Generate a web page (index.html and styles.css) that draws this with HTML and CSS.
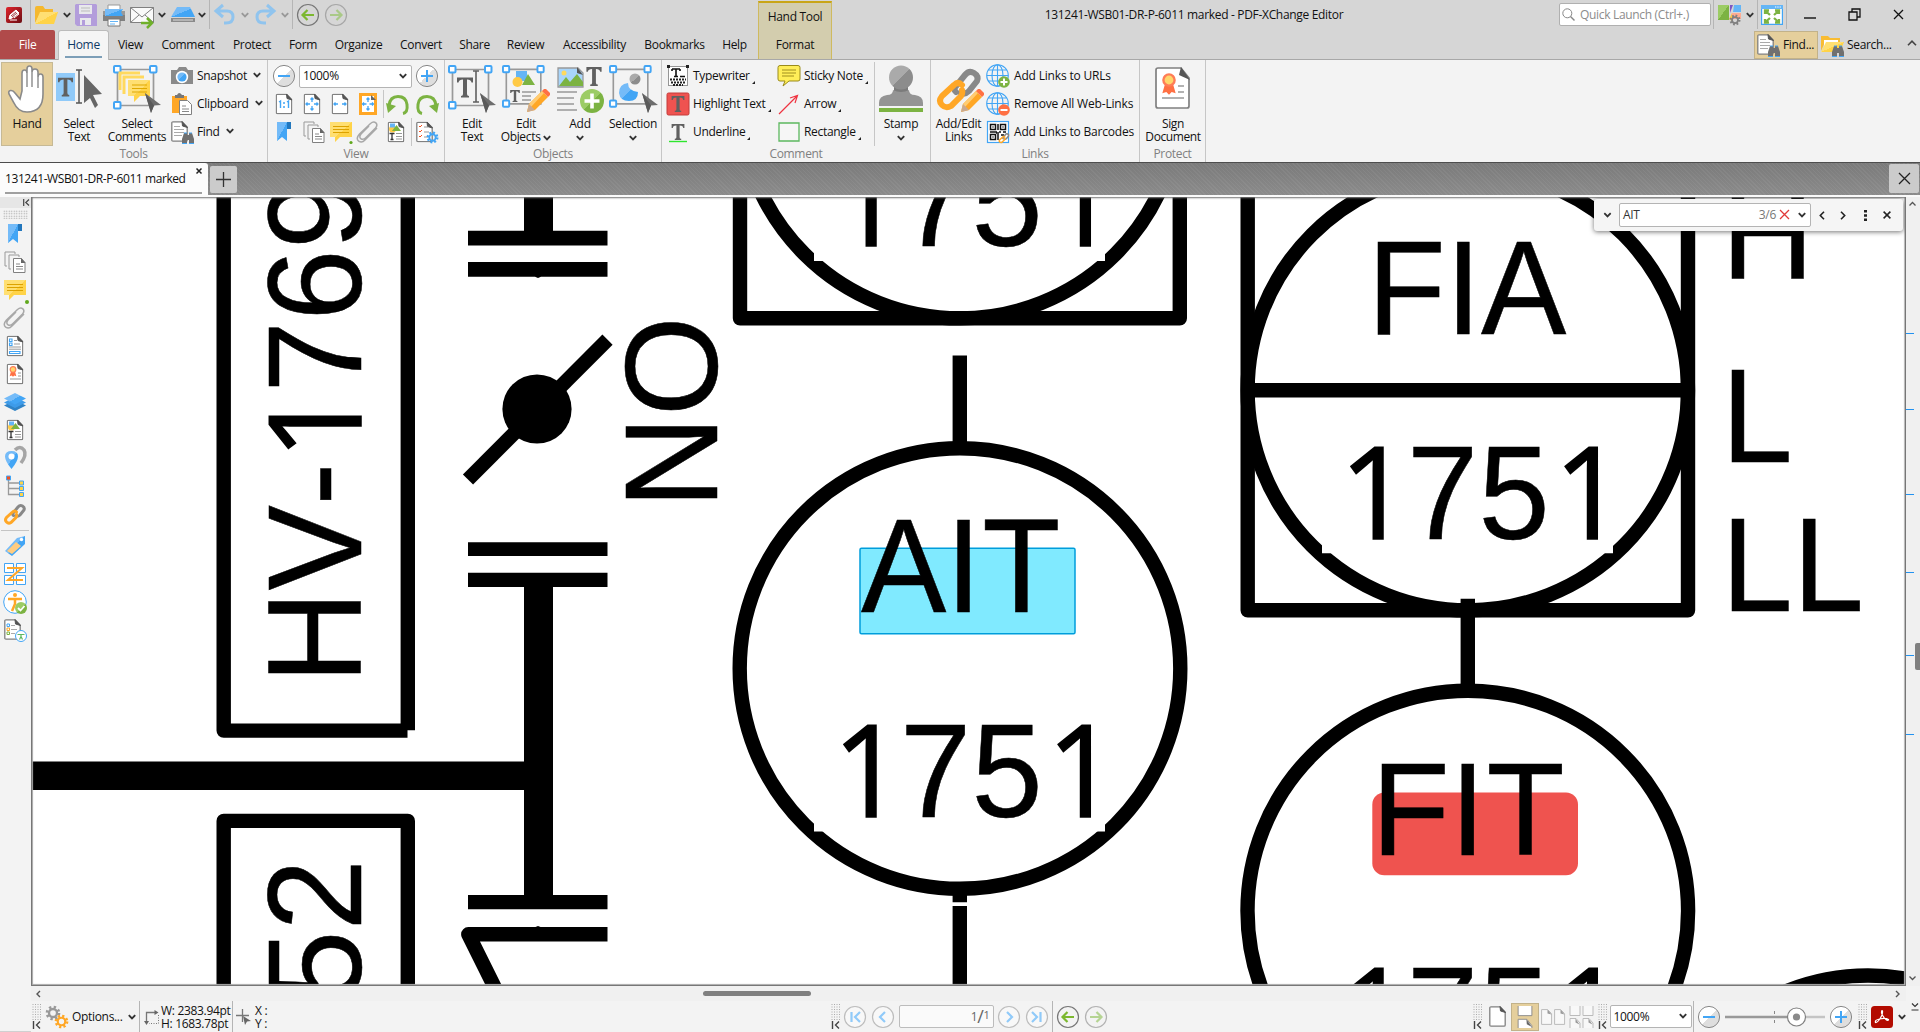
FILE: index.html
```html
<!DOCTYPE html>
<html lang="en">
<head>
<meta charset="utf-8">
<title>131241-WSB01-DR-P-6011 marked - PDF-XChange Editor</title>
<link rel="stylesheet" href="styles.css">
</head>
<body>
<svg class="defs" aria-hidden="true">
  <defs>
    <linearGradient id="gBtn" x1="0" y1="0" x2="1" y2="1"><stop offset=".5" stop-color="#fff"/><stop offset=".5" stop-color="#dedede"/></linearGradient>
    <linearGradient id="gBlue" x1="0" y1="0" x2="1" y2="1"><stop offset=".5" stop-color="#74bbf8"/><stop offset=".5" stop-color="#42a5f5"/></linearGradient>
    <linearGradient id="gYel" x1="0" y1="0" x2="1" y2="1"><stop offset=".5" stop-color="#ffdf72"/><stop offset=".5" stop-color="#ffd348"/></linearGradient>
    <linearGradient id="gGreen" x1="0" y1="0" x2="1" y2="1"><stop offset=".5" stop-color="#9ccc65"/><stop offset=".5" stop-color="#7cb342"/></linearGradient>
    <linearGradient id="gGrey" x1="0" y1="0" x2="1" y2="1"><stop offset=".5" stop-color="#aaa"/><stop offset=".5" stop-color="#8c8c8c"/></linearGradient>
    <linearGradient id="gRed" x1="0" y1="0" x2="1" y2="1"><stop offset="0" stop-color="#e0242c"/><stop offset="1" stop-color="#6b0d12"/></linearGradient>
  </defs>
  <symbol id="chev" viewBox="0 0 8 6"><path d="M.8 1.2 4 4.4 7.2 1.2" fill="none" stroke="currentColor" stroke-width="1.9"/></symbol>
  <symbol id="corner" viewBox="0 0 4 4"><path d="M4 0V4H0Z" fill="#222"/></symbol>
  <symbol id="cursor" viewBox="0 0 16 20"><path d="M0 0 16 12 9 12.500 6 20Z" fill="#6d6d6d"/><path d="M0 0 9 12.500 6 20Z" fill="#5a5a5a"/></symbol>
  <symbol id="binoc" viewBox="0 0 12 12"><path d="M2 1h3v2h2V1h3l2 6v5H7V8H5v4H0V7Z" fill="#707070"/><path d="M2 1h3M7 1h3M0 11.500h5M7 11.500h5" stroke="#42a5f5"/></symbol>
  <symbol id="page" viewBox="0 0 17 21"><path d="M2 .8H11L16.200 6V19q0 1.200-1.200 1.200H2Q.8 20.200.8 19V2Q.8.8 2 .8Z" fill="#fff" stroke="#808080" stroke-width="1.300"/><path d="M11 .5 16.500 6.500 11.500 5Z" fill="#555" stroke="#555"/></symbol>
  <symbol id="chain" viewBox="0 0 48 48"><g fill="none" stroke-width="6" stroke-linecap="round"><path d="M21 27q-3-2 0-6L30 10q4-5 9-2t3 8L34 26q-4 4-8 2" stroke="#888"/><path d="M27 20q-4-4-8 0L7 31q-4 5 0 9t9 1l10-10q2-3 1-6" stroke="#ffa726"/></g></symbol>
  <symbol id="pencil" viewBox="0 0 24 24"><path d="M1 23 3 15 16 2 22 8 9 21Z" fill="#ffa726"/><path d="M1 23 3 15 16 2 18 4 5 18Z" fill="#ffcc72"/><path d="M16 2 18 0q1-1 2 0l4 4q1 1 0 2l-2 2Z" fill="#ff7043"/><path d="M1 23 3 15l6 6Z" fill="#c9aa91"/></symbol>
  <symbol id="i-bookmark" viewBox="0 0 24 24"><path d="M5 2h10v19l-5-4-5 4Z" fill="url(#gBlue)"/><path d="M15 2h4v7h-4Z" fill="#2277bd"/></symbol>
  <symbol id="i-pages" viewBox="0 0 24 24"><path d="M4 16H2V2h10v2M8 19H6V5h10v2" fill="none" stroke="#999"/><path d="M10.500 8.500h8l3.500 4v10H10.500Z" fill="#fff" stroke="#808080"/><path d="M18 8l4.500 5H18Z" fill="#666"/><path d="M13 14h4M13 16.500h7M13 19h7" stroke="#888"/></symbol>
  <symbol id="i-note" viewBox="0 0 24 24"><path d="M1 2h22v15H11l-5 5v-5H1Z" fill="url(#gYel)"/><path d="M4 6.500h16M4 9.500h16M4 12.500h16" stroke="#dca200"/></symbol>
  <symbol id="i-clip" viewBox="0 0 24 24"><path d="M13 6 5 14q-2.500 3.500.3 5 2.200 1 4.700-1.500L19.500 8q2.500-3 .4-5.100-2.400-2-5.400.6L3.500 14q-4 4.600-.8 7.200 3.300 2 6.300-1.200L21 8" fill="none" stroke="#a8a8a8" stroke-width="1.500"/></symbol>
  <symbol id="i-content" viewBox="0 0 24 24"><use href="#page" x="3.500" y="1.500" width="17" height="21"/><circle cx="8.500" cy="9" r="3.500" fill="#ffca45"/><path d="M6 3.500h5v4H6Z" fill="#64b5f6"/><path d="M8 11 12.500 5 17 11Z" fill="#7cb342"/><path d="M5.500 13.500h5M8 13.500v6M6.500 19.500h3" stroke="#333" stroke-width="1.300"/><path d="M12 13.500h6M12 16.500h6M12 19h6" stroke="#999"/></symbol>
  <symbol id="i-back" viewBox="0 0 24 24"><circle cx="12" cy="12" r="10.500" fill="none" stroke="#777" stroke-width="1.200"/><path d="M18 12H7M11.500 7 6.500 12l5 5" fill="none" stroke="#7cb82f" stroke-width="2.200"/></symbol>
  <symbol id="i-fwd" viewBox="0 0 24 24"><g opacity=".6"><circle cx="12" cy="12" r="10.500" fill="none" stroke="#888" stroke-width="1.200"/><path d="M6 12H17M12.500 7l5 5-5 5" fill="none" stroke="#8cc152" stroke-width="2.200"/></g></symbol>
  <symbol id="i-minus" viewBox="0 0 24 24"><circle cx="12" cy="12" r="10.600" fill="url(#gBtn)" stroke="#888"/><path d="M6 12h12" stroke="#42a5f5" stroke-width="2"/></symbol>
  <symbol id="i-plus" viewBox="0 0 24 24"><circle cx="12" cy="12" r="10.600" fill="url(#gBtn)" stroke="#888"/><path d="M6 12h12M12 6v12" stroke="#42a5f5" stroke-width="2"/></symbol>
  <symbol id="i-globe" viewBox="0 0 24 24"><g fill="none" stroke="#42a5f5" stroke-width="1.100"><circle cx="11.500" cy="11.500" r="10.800"/><ellipse cx="11.500" cy="11.500" rx="5.500" ry="10.800"/><path d="M11.500 1v21M1 11.500h21M3 6h17M3 17h17"/></g></symbol>
  <symbol id="i-find" viewBox="0 0 24 24"><use href="#page" x="1" y="1" width="17" height="21"/><path d="M4 6.500h6M4 9.500h10M4 12.500h10M4 15.500h8" stroke="#aaa"/><use href="#binoc" x="12" y="12" width="12" height="12"/></symbol>
  <symbol id="handles" viewBox="0 0 48 48"><path d="M4.500 4.500H40.500V40.500H4.500Z" fill="none" stroke="#999" stroke-width="1.700"/><g fill="#fff" stroke="#42a5f5" stroke-width="2"><rect x="1" y="1" width="6.500" height="6.500" rx="1"/><rect x="37" y="1" width="6.500" height="6.500" rx="1"/><rect x="1" y="37" width="6.500" height="6.500" rx="1"/></g></symbol>
  <symbol id="bigT" viewBox="0 0 16 20"><path d="M0 0H16V5H14.500Q14 2 10 2V16.500Q10 18.500 12 18.500V20H4V18.500Q6 18.500 6 16.500V2Q2 2 1.500 5H0Z" fill="#606060"/></symbol>
  <symbol id="seal" viewBox="0 0 12 16"><path d="M3 8 1 15l3-1 2 2 2-2 3 1-2-7" fill="#ff7043"/><circle cx="6" cy="5" r="4.200" fill="#ffd66b" stroke="#ff7d57" stroke-width="1.800"/></symbol>
  <symbol id="grip" viewBox="0 0 10 27"><path d="M1 1V17M3.500 1V17M6 1V17M8.500 1V17" stroke="#aaa" stroke-dasharray="1 1.500"/><path d="M1.500 18v8M8 18.500 4.500 22 8 25.500" fill="none" stroke="#444" stroke-width="1.400"/></symbol>
  <symbol id="gear" viewBox="0 0 24 24"><circle cx="12" cy="12" r="8.500" fill="none" stroke="currentColor" stroke-width="5" stroke-dasharray="3.300 3.375"/><circle cx="12" cy="12" r="6" fill="none" stroke="currentColor" stroke-width="3.500"/></symbol>
</svg>

<header class="titlebar">
  <div class="qat">
    <svg width="18" height="18" viewBox="0 0 18 18"><rect x="1" y="1" width="16" height="16" rx="2" fill="url(#gRed)"/><path d="M4 13 5 9 11 4l3 3-7 5Zm5-1 5-4M5 14h7" fill="#fff" stroke="#fff"/><path d="M6 10l5-4M7 11l5-4" stroke="#8a1015" stroke-width=".8"/></svg>
    <i class="sep"></i>
    <svg width="24" height="20" viewBox="0 0 24 20"><path d="M1 18V3Q1 1 3 1h6l2 3h8v3H7Z" fill="#f5b82e"/><path d="M1 19 6 7H24L20 19Z" fill="url(#gYel)"/></svg>
    <svg class="chev"><use href="#chev"/></svg>
    <svg width="24" height="24" viewBox="0 0 24 24"><path d="M2 1H22L23 2V23H3L1 21V2Z" fill="#b39ddb"/><path d="M5 2h13v9H5ZM6 15h11v7H6Z" fill="#e8e8ec"/><path d="M7 5h9M7 8h9" stroke="#bbb"/><path d="M8 17h3v5H8Z" fill="#b39ddb"/></svg>
    <svg width="24" height="24" viewBox="0 0 24 24"><path d="M6 2H18V8H6Z" fill="#fff" stroke="#999"/><path d="M1 8H23V18H1Z" fill="#808080"/><path d="M1 8H23V12H1Z" fill="#999"/><path d="M3 6H21L19 9 21 13H3Z" fill="url(#gBlue)"/><path d="M6 16H18V23H6Z" fill="#fff" stroke="#777"/><path d="M8 18.500h8M8 21h5" stroke="#64b5f6"/></svg>
    <svg width="26" height="24" viewBox="0 0 26 24"><path d="M1.500 4.500h23v15h-23Z" fill="#fafafa" stroke="#808080"/><path d="M1.500 4.500 13 14 24.500 4.500M1.500 19.500 10 12M24.500 19.500 16 12" fill="none" stroke="#808080"/><path d="M12 20h11M18 15l5 5-5 5" fill="none" stroke="#6fb02a" stroke-width="2.500"/></svg>
    <svg class="chev"><use href="#chev"/></svg>
    <svg width="26" height="18" viewBox="0 0 26 18"><path d="M7 1H20L25 11H1Z" fill="url(#gBlue)"/><path d="M1 12H25V16H1Z" fill="#8a8a8a"/><path d="M3 14h20" stroke="#ddd"/></svg>
    <svg class="chev"><use href="#chev"/></svg>
    <i class="sep"></i>
    <svg width="22" height="22" viewBox="0 0 22 22"><path d="M9 1 2 7l7 6M3 7h10q6 0 6 6t-7 6h-2" fill="none" stroke="#90c4ee" stroke-width="3"/></svg>
    <svg class="chev dim"><use href="#chev"/></svg>
    <svg width="22" height="22" viewBox="0 0 22 22"><path d="M13 1l7 6-7 6M19 7H9q-6 0-6 6t7 6h2" fill="none" stroke="#90c4ee" stroke-width="3"/></svg>
    <svg class="chev dim"><use href="#chev"/></svg>
    <i class="sep"></i>
    <svg class="ic"><use href="#i-back"/></svg>
    <svg class="ic"><use href="#i-fwd"/></svg>
  </div>
  <div class="context"><span>Hand Tool</span><span>Format</span></div>
  <div class="caption">131241-WSB01-DR-P-6011 marked - PDF-XChange Editor</div>
  <div class="wintools">
    <div class="quick"><svg width="13" height="13" viewBox="0 0 13 13"><circle cx="5.300" cy="5.300" r="4.500" fill="none" stroke="#888"/><path d="M8.500 8.500 12.500 12.500" stroke="#888" stroke-width="1.500"/></svg><span>Quick Launch (Ctrl+.)</span></div>
    <i class="sep"></i>
    <svg width="24" height="22" viewBox="0 0 24 22"><path d="M0 1H11V16H0Z" fill="url(#gGreen)"/><path d="M12 1h3l-3 8Z" fill="#7e57c2"/><path d="M16 1h7v7h-8Z" fill="#64b5f6"/><path d="M14 9h9v6H12Z" fill="#ffab91"/><path d="M11 15 14 9v8Z" fill="#ffca45"/><svg x="11" y="10" width="12" height="12" color="#808080"><use href="#gear"/></svg></svg>
    <svg class="chev"><use href="#chev"/></svg>
    <i class="sep"></i>
    <svg width="22" height="20" viewBox="0 0 22 20"><path d="M.6.6H21.400V19.400H.6Z" fill="#fff" stroke="#42a5f5" stroke-width="1.200"/><path d="M0 0H22V4H0Z" fill="#64b5f6"/><path d="M14 2h6" stroke="#fff" stroke-dasharray="1.300 1"/><path d="M4 9V5.500h4M14 5.500h4V9M18 14v3.500h-4M8 17.500H4V14M4.500 6 9 10M17.500 6 13 10M17.500 17 13 13M4.500 17 9 13" fill="none" stroke="#7cb342" stroke-width="2.300"/></svg>
    <i class="sep"></i>
    <svg width="12" height="12" viewBox="0 0 12 12"><path d="M0 9h12" stroke="#111" stroke-width="1.400"/></svg>
    <svg width="13" height="13" viewBox="0 0 13 13"><path d="M1 4h8v8H1ZM4 4V1h8v8H9" fill="none" stroke="#111" stroke-width="1.300"/></svg>
    <svg width="11" height="11" viewBox="0 0 11 11"><path d="M1 1l9 9M10 1 1 10" stroke="#111" stroke-width="1.300"/></svg>
  </div>
  <nav class="tabs">
    <a class="file">File</a><a class="home">Home</a><a>View</a><a>Comment</a><a>Protect</a><a>Form</a><a>Organize</a><a>Convert</a><a>Share</a><a>Review</a><a>Accessibility</a><a>Bookmarks</a><a>Help</a>
  </nav>
  <div class="finders">
    <div class="fbtn on"><svg class="ic"><use href="#i-find"/></svg>Find...</div>
    <div class="fbtn"><svg class="ic" viewBox="0 0 24 24"><path d="M1 18V3h7l2 2h10v4H5Z" fill="#f9bc32"/><path d="M4 7h14v4H6L4 15Z" fill="#fff"/><path d="M1 19 6 9H24L20 19Z" fill="url(#gYel)"/><use href="#binoc" x="12" y="12" width="12" height="12"/></svg>Search...</div>
    <svg class="up" width="10" height="6" viewBox="0 0 10 6"><path d="M1 5.200 5 1.200 9 5.200" fill="none" stroke="#444" stroke-width="1.600"/></svg>
  </div>
</header>

<section class="ribbon">
  <div class="group tools">
    <div class="items">
      <div class="big on"><svg viewBox="0 0 48 48"><path d="M18 26V8q0-3 2.500-3T23 8V4q0-3 2.500-3T28 4v3q0-3 3-3t3 3v5q0-3 2.500-3T39 12V29q0 18-16 18-9 0-13-9L5 29q-1-3 1.500-3.500T11 28l5 6Z" fill="#fff" stroke="#8a8a8a" stroke-width="1.600" transform="translate(1 0)"/><path d="M24 8V22M29 7V22M35 12V23" stroke="#8a8a8a" stroke-width="1.400"/></svg><span>Hand</span></div>
      <div class="big"><svg viewBox="0 0 48 48"><path d="M1 8H20V36H1Z" fill="#90caf9"/><use href="#bigT" x="3" y="12" width="15" height="20"/><path d="M21 5h6M24 5V38M21 38h6" stroke="#555" stroke-width="1.500"/><path d="M29 10 47 29 38 30 43 40 40 43 35 33 29 38Z" fill="#666"/></svg><span>Select<br>Text</span></div>
      <div class="big"><svg viewBox="0 0 48 48"><use href="#handles" width="48" height="48"/><path d="M7 25V8H27M11 29V12H31" fill="none" stroke="#ffd95e" stroke-width="3"/><path d="M15 15H37V31H27L21 37V31H15Z" fill="url(#gYel)"/><path d="M19 20h15M19 23.500h15M19 27h15" stroke="#e0a800" stroke-width="1.200"/><use href="#cursor" x="32" y="28" width="16" height="20"/></svg><span>Select<br>Comments</span></div>
      <div class="list">
        <div><svg class="ic" viewBox="0 0 24 24"><path d="M1 6h6l2-3h7l2 3h5v14H1Z" fill="#8a8a8a"/><circle cx="12" cy="13" r="6.200" fill="#fff"/><circle cx="12" cy="13" r="4.600" fill="url(#gBlue)"/></svg>Snapshot<svg class="chev"><use href="#chev"/></svg></div>
        <div><svg class="ic" viewBox="0 0 24 24"><path d="M2 4H17V21H2Z" fill="#ffa726"/><path d="M5 6V3h2q2-4 5 0h2v3Z" fill="#777"/><path d="M9.500 8.500h8l4 4v10h-12Z" fill="#fff" stroke="#808080"/><path d="M12 14h4M12 17h7M12 19.500h7" stroke="#888"/></svg>Clipboard<svg class="chev"><use href="#chev"/></svg></div>
        <div><svg class="ic"><use href="#i-find"/></svg>Find<svg class="chev"><use href="#chev"/></svg></div>
      </div>
    </div>
    <div class="gname">Tools</div>
  </div>

  <div class="group view">
    <div class="items rows">
      <div class="r1"><svg class="ic"><use href="#i-minus"/></svg><div class="combo">1000%<svg class="chev"><use href="#chev"/></svg></div><svg class="ic"><use href="#i-plus"/></svg></div>
      <div class="r2">
        <svg class="ic" viewBox="0 0 24 24"><use href="#page" x="3.500" y="1.500" width="17" height="21"/><path d="M7 10 8.500 9v7M15 10l1.500-1v7" fill="none" stroke="#42a5f5" stroke-width="1.400"/><path d="M12 10v2M12 14v2" stroke="#42a5f5" stroke-width="1.500"/></svg>
        <svg class="ic" viewBox="0 0 24 24"><use href="#page" x="3.500" y="1.500" width="17" height="21"/><path d="M12 6v4M12 14v4M6 12h4M14 12h4M10.500 7.500 12 6l1.500 1.500M10.500 16.500 12 18l1.500-1.500M7.500 10.500 6 12l1.500 1.500M16.500 10.500 18 12l-1.500 1.500" fill="none" stroke="#42a5f5" stroke-width="1.300"/></svg>
        <svg class="ic" viewBox="0 0 24 24"><use href="#page" x="3.500" y="1.500" width="17" height="21"/><path d="M6 12h4M14 12h4M7.500 10.500 6 12l1.500 1.500M16.500 10.500 18 12l-1.500 1.500" fill="none" stroke="#42a5f5" stroke-width="1.300"/></svg>
        <svg class="ic" viewBox="0 0 24 24"><path d="M4.500 2.500h15v19h-15Z" fill="#fff" stroke="#ffa726" stroke-width="3"/><path d="M15 3l5 5h-5Z" fill="#666"/><path d="M12 6v4M12 14v4M6.500 12h4M13.500 12h4M10.500 7.500 12 6l1.500 1.500M10.500 16.500 12 18l1.500-1.500M8 10.500 6.500 12 8 13.500M16 10.500 17.500 12 16 13.500" fill="none" stroke="#42a5f5" stroke-width="1.300"/></svg>
        <i class="sep"></i>
        <svg class="ic" viewBox="0 0 24 24"><path d="M3 14q1-9 9-9t9 8-4 9" fill="none" stroke="#7cb342" stroke-width="3" transform="translate(0 -.5)"/><path d="M0 11 10 14 2 21Z" fill="#7cb342"/></svg>
        <svg class="ic" viewBox="0 0 24 24"><g transform="matrix(-1 0 0 1 24 0)"><path d="M3 14q1-9 9-9t9 8-4 9" fill="none" stroke="#7cb342" stroke-width="3" transform="translate(0 -.5)"/><path d="M0 11 10 14 2 21Z" fill="#7cb342"/></g></svg>
      </div>
      <div class="r3">
        <svg class="ic"><use href="#i-bookmark"/></svg><svg class="ic"><use href="#i-pages"/></svg><svg class="ic dotted"><use href="#i-note"/><circle cx="22" cy="22.500" r="1.600" fill="#5fa81c"/></svg><svg class="ic"><use href="#i-clip"/></svg><svg class="ic"><use href="#i-content"/></svg><i class="sep"></i>
        <svg class="ic" viewBox="0 0 24 24"><use href="#page" x="1" y="1.500" width="17" height="21"/><path d="M4 6l1 1 2-2M4 11l1 1 2-2M4 16l1 1 2-2" fill="none" stroke="#f4511e"/><path d="M9 7h4M9 12h5M9 17h4" stroke="#999"/><svg x="11" y="11" width="13" height="13" color="#42a5f5"><use href="#gear"/></svg></svg>
      </div>
    </div>
    <div class="gname">View</div>
  </div>

  <div class="group objects">
    <div class="items">
      <div class="big"><svg viewBox="0 0 48 48"><use href="#handles" width="48" height="48"/><use href="#bigT" x="9" y="12" width="16" height="21"/><path d="M25 6h6M28 6V37M25 37h6" stroke="#606060" stroke-width="1.600"/><use href="#cursor" x="32" y="28" width="16" height="20"/></svg><span>Edit<br>Text</span></div>
      <div class="big"><svg viewBox="0 0 48 48"><use href="#handles" width="46" height="46"/><path d="M14 6h11v10H14Z" fill="#64b5f6"/><path d="M20 20 26 9l7 11Z" fill="#7cb342"/><circle cx="15.500" cy="17" r="5" fill="#ffca45"/><use href="#bigT" x="8" y="25" width="10" height="12"/><path d="M20 27h14M20 31h9M20 35h9" stroke="#999" stroke-width="1.400"/><use href="#pencil" x="24" y="24" width="24" height="24"/></svg><span>Edit<br>Objects <svg class="chev"><use href="#chev"/></svg></span></div>
      <div class="big"><svg viewBox="0 0 48 48"><path d="M2 3H22L27 8V22H2Z" fill="#a8d5fb" stroke="#999" stroke-width="1.300"/><circle cx="8" cy="8" r="2.500" fill="#ffd95e"/><path d="M3 21 10 12l4 5 7-8 6 8v4Z" fill="#7cb342"/><path d="M21 2l6 8-6-2Z" fill="#555"/><use href="#bigT" x="30" y="2" width="16" height="19"/><path d="M1 27h20M1 33h17M1 39h17M1 45h20" stroke="#999" stroke-width="1.500"/><circle cx="36" cy="36" r="12" fill="url(#gGreen)"/><path d="M28.500 36h15M36 28.500v15" stroke="#fff" stroke-width="3.600"/></svg><span>Add<br><svg class="chev"><use href="#chev"/></svg></span></div>
      <div class="big"><svg viewBox="0 0 48 48"><use href="#handles" width="46" height="46"/><circle cx="26" cy="14" r="5.500" fill="url(#gGrey)"/><path d="M19 18q-9 1-9 10 1 8 10 8t9-9q-10-1-10-9Z" fill="url(#gBlue)"/><use href="#cursor" x="33" y="28" width="16" height="20"/></svg><span>Selection<br><svg class="chev"><use href="#chev"/></svg></span></div>
    </div>
    <div class="gname">Objects</div>
  </div>

  <div class="group comment">
    <div class="items">
      <div class="list">
        <div><svg class="ic" viewBox="0 0 24 24"><path d="M2.500 2.500h19v19h-19Z" fill="#fff" stroke="#333" stroke-dasharray="1 1"/><path d="M1 1h3v3H1ZM20 1h3v3h-3Z" fill="#222"/><path d="M6 5h8M10 5v8M8 12.500h4M6 5v2M14 5v2M14 12.500h5" stroke="#111" stroke-width="1.600"/><path d="M4 15.500h16M5 18.500h14M7 21h10" stroke="#222" stroke-width="2" stroke-dasharray="2 1"/></svg>Typewriter<svg class="corner"><use href="#corner"/></svg></div>
        <div><svg class="ic" viewBox="0 0 24 24"><rect x="1" y="1" width="22" height="22" rx="1.500" fill="#ef5350" stroke="#c43d3a"/><use href="#bigT" x="5" y="4" width="14" height="16"/></svg>Highlight Text<svg class="corner"><use href="#corner"/></svg></div>
        <div><svg class="ic" viewBox="0 0 24 24"><use href="#bigT" x="5" y="4" width="14" height="16"/><path d="M3 21.500h18" stroke="#2ee62e" stroke-width="1.400"/></svg>Underline<svg class="corner"><use href="#corner"/></svg></div>
      </div>
      <div class="list">
        <div><svg class="ic" viewBox="0 0 24 24"><path d="M3 1.500H21q2 0 2 2V15q0 2-2 2H12L6 22 8 17H3q-2 0-2-2V3.500q0-2 2-2Z" fill="#ffee58" stroke="#9a8b1a"/><path d="M5 6h14M5 9h14M5 12h12" stroke="#a08f1e"/></svg>Sticky Note<svg class="corner"><use href="#corner"/></svg></div>
        <div><svg class="ic" viewBox="0 0 24 24"><path d="M2 22 20 4M13 6 20.500 3.500 18 11M20.500 3.500 15 9" fill="none" stroke="#ef3340" stroke-width="1.200"/></svg>Arrow<svg class="corner"><use href="#corner"/></svg></div>
        <div><svg class="ic" viewBox="0 0 24 24"><path d="M2 3h20v18H2Z" fill="#f6f6f6" stroke="#5cb85f" stroke-width="1.300"/></svg>Rectangle<svg class="corner"><use href="#corner"/></svg></div>
      </div>
      <i class="sep"></i>
      <div class="big"><svg viewBox="0 0 48 48"><path d="M17 18H31V30H17Z" fill="#7b7b7b"/><circle cx="24" cy="12.500" r="12" fill="url(#gGrey)"/><path d="M2 41V38q0-7 8-8 6 0 6-5 8 4 16 0 0 5 6 5 8 1 8 8v3Z" fill="#949494"/><path d="M2 43H46V47H2Z" fill="#7cb342"/></svg><span>Stamp<br><svg class="chev"><use href="#chev"/></svg></span></div>
    </div>
    <div class="gname">Comment</div>
  </div>

  <div class="group links">
    <div class="items">
      <div class="big"><svg viewBox="0 0 48 48"><use href="#chain" width="48" height="48"/><use href="#pencil" x="25" y="24" width="24" height="24"/></svg><span>Add/Edit<br>Links</span></div>
      <div class="list">
        <div><svg class="ic" viewBox="0 0 24 24"><use href="#i-globe"/><circle cx="18" cy="18" r="5.800" fill="#7cb342"/><path d="M14.500 18h7M18 14.500v7" stroke="#fff" stroke-width="2"/></svg>Add Links to URLs</div>
        <div><svg class="ic" viewBox="0 0 24 24"><use href="#i-globe"/><circle cx="18" cy="18" r="5.800" fill="#ff7043"/><path d="M14.500 18h7" stroke="#fff" stroke-width="2"/></svg>Remove All Web-Links</div>
        <div><svg class="ic" viewBox="0 0 24 24"><rect x="1.500" y="1.500" width="21" height="21" fill="#fff" stroke="#42a5f5" stroke-width="1.200"/><path d="M4.500 4.500h5v5h-5ZM14.500 4.500h5v5h-5ZM4.500 14.500h5v5h-5Z" fill="none" stroke="#111" stroke-width="1.500"/><path d="M6.500 7h1M16.500 7h1M6.500 17h1M12 4v6M4 12h7M13 12h2M17 12h3M12 14v6M10 13h3M15 15h3" stroke="#111" stroke-width="1.500"/><use href="#chain" x="12" y="12" width="12" height="12"/></svg>Add Links to Barcodes</div>
      </div>
    </div>
    <div class="gname">Links</div>
  </div>

  <div class="group protect">
    <div class="items">
      <div class="big"><svg viewBox="0 0 48 48"><path d="M9 3H32L40 13V41q0 2-2 2H9q-2 0-2-2V5q0-2 2-2Z" fill="#fff" stroke="#808080" stroke-width="1.700"/><path d="M32 2 41 15 30 10Z" fill="#555"/><use href="#seal" x="12" y="8" width="16" height="22"/><path d="M29 21h6M29 27h6M13 33h22" stroke="#999" stroke-width="1.400"/></svg><span>Sign<br>Document</span></div>
    </div>
    <div class="gname">Protect</div>
  </div>
</section>

<div class="doctabs">
  <div class="doctab"><span>131241-WSB01-DR-P-6011 marked</span><svg width="6" height="6" viewBox="0 0 6 6"><path d="M.5.5l5 5M5.500.5l-5 5" stroke="#222" stroke-width="1.500"/></svg></div>
  <div class="newtab"><svg width="15" height="15" viewBox="0 0 15 15"><path d="M7.500 0v15M0 7.500h15" stroke="#333" stroke-width="1.300"/></svg></div>
  <div class="closeall"><svg width="13" height="13" viewBox="0 0 13 13"><path d="M1 1l11 11M12 1 1 12" stroke="#222" stroke-width="1.300"/></svg></div>
</div>

<main class="work">
  <aside class="side">
    <div class="sidehead"><svg width="7" height="7" viewBox="0 0 7 7"><path d="M.7 0v7M6 .5 2.800 3.500 6 6.500" fill="none" stroke="#444" stroke-width="1.200"/></svg></div>
    <div class="sidegrip"></div>
    <svg class="ic"><use href="#i-bookmark"/></svg>
    <svg class="ic"><use href="#i-pages"/></svg>
    <svg class="ic dotted"><use href="#i-note"/><circle cx="24" cy="24" r="2" fill="#5fa81c"/></svg>
    <svg class="ic"><use href="#i-clip"/></svg>
    <svg class="ic" viewBox="0 0 24 24"><use href="#page" x="3.500" y="1.500" width="17" height="21"/><path d="M6.500 5h2.500v2.500H6.500ZM6.500 9h2.500v2.500H6.500ZM6.500 17.500h10.500v2H6.500Z" fill="none" stroke="#42a5f5" stroke-width="1.100"/><path d="M11 6.500h3M11 10h6M6 13h12M6 15.200h12" stroke="#999"/></svg>
    <svg class="ic" viewBox="0 0 24 24"><use href="#page" x="3.500" y="1.500" width="17" height="21"/><use href="#seal" x="6" y="4" width="8" height="11"/><path d="M15 11h3M15 14h3M7 17h11" stroke="#999"/></svg>
    <svg class="ic" viewBox="0 0 24 24"><path d="M12 10 23 15.500 12 21 1 15.500Z" fill="#3083c6"/><path d="M12 7 23 12.500 12 18 1 12.500Z" fill="#3d9be9"/><path d="M12 3 23 8.500 12 14.500 1 8.500Z" fill="url(#gBlue)"/></svg>
    <svg class="ic"><use href="#i-content"/></svg>
    <svg class="ic" viewBox="0 0 24 24"><path d="M12 4q5-5 9 0 3 5-3 13" fill="none" stroke="#a5a5a5" stroke-width="3.500"/><path d="M8.500 23Q2 15 2 10.500 2 5 8.500 5T15 10.500Q15 15 8.500 23Z" fill="url(#gBlue)"/><circle cx="8.500" cy="10.500" r="3" fill="#fff"/></svg>
    <svg class="ic" viewBox="0 0 24 24"><path d="M5.500 4v16.500H18M5.500 9H18M5.500 14.500H18" fill="none" stroke="#999" stroke-width="1.300"/><path d="M3.500 2h4v4h-4Z" fill="#f4511e" stroke="#42a5f5"/><path d="M16.500 7h4v4h-4ZM16.500 12.500h4v4h-4ZM16.500 18.500h4v4h-4Z" fill="#ffd348" stroke="#42a5f5"/></svg>
    <svg class="ic"><use href="#chain"/></svg>
    <i class="hsep"></i>
    <svg class="ic" viewBox="0 0 24 24"><path d="M2 17 14 4 22 2V10L9 22Z" fill="url(#gBlue)"/><path d="M4 17 13 8l5 4-9 8Z" fill="#ffcc80"/><circle cx="18.500" cy="5.500" r="1.700" fill="#fff"/></svg>
    <svg class="ic" viewBox="0 0 24 24"><path d="M1.500 1.500h9v9h-9ZM13.500 1.500h9v9h-9ZM1.500 13.500h9v9h-9ZM13.500 13.500h9v9h-9Z" fill="#fff" stroke="#42a5f5"/><path d="M4 6h15L5 18h15" fill="none" stroke="#ffa726" stroke-width="2"/></svg>
    <svg class="ic" viewBox="0 0 24 24"><circle cx="12" cy="12" r="11.300" fill="#fff" stroke="#42a5f5"/><circle cx="12" cy="5" r="2" fill="#ffa726"/><path d="M5 9h14M12 9v6M12 14 9 21" fill="none" stroke="#ffa726" stroke-width="2.500"/><circle cx="18" cy="18" r="6" fill="url(#gGreen)"/><path d="M15 18l2.500 2.500 4-4.500" fill="none" stroke="#fff" stroke-width="1.800"/></svg>
    <svg class="ic" viewBox="0 0 24 24"><use href="#page" x="1" y="1" width="17" height="21"/><path d="M4 6h2.500v2.500H4Z" fill="none" stroke="#42a5f5"/><path d="M4 10h2.500v2.500H4Z" fill="none" stroke="#ffa726"/><path d="M4 14h2.500v2.500H4Z" fill="none" stroke="#7cb342"/><path d="M8 7.500h4M8 11.500h6M8 15.500h4" stroke="#aaa"/><circle cx="18" cy="18" r="5.500" fill="#fff" stroke="#42a5f5"/><path d="M14.500 16.500h7M18 16v3M18 18.500l-1.500 3M18 18.500l1.500 3" stroke="#5cb860" stroke-width="1.200"/></svg>
  </aside>

  <div class="docarea">
    <div class="viewport">
      <svg class="drawing" viewBox="32 197 1873 789" width="1873" height="789">
        <defs>
          <g id="n1751"><text class="cad" transform="scale(1 1.045)"><tspan class="one" x="4.200">1</tspan><tspan x="71.500 143">75</tspan><tspan class="one" x="218.500">1</tspan></text></g>
        </defs>
        <rect x="860" y="548.300" width="215" height="85.500" rx="1.500" fill="#80eaff" stroke="#009ddb" stroke-width="1.500"/>
        <rect x="1372.300" y="792.500" width="205.700" height="82.700" rx="12" fill="#ef534f"/>
        <g fill="none" stroke="#000" stroke-width="14.400" stroke-linejoin="round">
          <path d="M223.700 150V730.600H407.500M407.800 150V730.200"/>
          <path d="M223.700 1100V820.900H407.800V1100"/>
          <path d="M607.500 934.300H468.300L500 998"/>
          <path d="M607.500 339.700 468 479.500"/>
          <path d="M740 150V318.300H1179.800V150M1247.700 150V610.300H1688V150M1247.700 390.300H1688"/>
          <circle cx="960" cy="98.200" r="220.200"/>
          <circle cx="960" cy="668.500" r="220.300"/>
          <circle cx="1467.800" cy="390.200" r="220.200"/>
          <circle cx="1467.800" cy="911" r="220.300"/>
          <circle cx="1868" cy="1195.500" r="220"/>
          <path d="M959.800 355.500V445M959.800 894V902.300M959.800 906V1000M1467.800 598.700V688"/>
        </g>
        <path fill="#fff" d="M814 200H1105V261H814ZM814 724H1105V831.500H814ZM1322 440H1613V553.300H1322Z"/>
        <path d="M32 761.400H524V587H468V572.700H607.500V587H553V895H607.500V909.300H468V895H524V790H32ZM524 190H553V230.800H607.500V245.500H468V230.800H524ZM468 262H607.500V276.700H541L538 278 535 276.700H468ZM468 542.200H607.500V556H468ZM533 928 538 926 543 928Z"/>
        <circle cx="537" cy="409" r="34.600"/>
        <use href="#n1751" x="828.500" y="246.200"/>
        <use href="#n1751" x="828.500" y="817.300"/>
        <use href="#n1751" x="1335.500" y="538.700"/>
        <use href="#n1751" x="1335.500" y="1060.300"/>
        <text class="cad" transform="translate(861 612) scale(1 1.045)" x="0 84.800 121.200">AIT</text>
        <text class="cad" transform="translate(1367.500 334.300) scale(1 1.045)" x="0 78 113.600">FIA</text>
        <text class="cad" transform="translate(1371.500 854.500) scale(1 1.030)" x="0 78.500 115">FIT</text>
        <text class="cad" transform="translate(1721.500 278.500) scale(1 1.045)">H</text>
        <text class="cad" transform="translate(1721.500 462.200) scale(1 1.045)">L</text>
        <text class="cad" transform="translate(1721.500 610.500) scale(1 1.045)">LL</text>
        <text class="cad" transform="translate(717.200 508.500) rotate(-90) scale(1 1.035)">NO</text>
        <text class="cad" transform="translate(361 683.500) rotate(-90) scale(1 1.045)"><tspan x="0 93 178">HV-</tspan><tspan class="one" x="224">1</tspan><tspan x="291 363 434.500">769</tspan></text>
        <text class="cad" transform="translate(361 1001.700) rotate(-90) scale(1 1.045)" x="0 71.200">52</text>
      </svg>
      <div class="findbar">
        <svg width="9" height="6" viewBox="0 0 8 6"><use href="#chev"/></svg>
        <div class="findbox"><span>AIT</span><em>3/6</em><svg width="11" height="11" viewBox="0 0 11 11"><path d="M1 1l9 9M10 1 1 10" stroke="#e03a3a" stroke-width="1.300"/></svg><svg class="chev"><use href="#chev"/></svg></div>
        <svg width="6" height="9" viewBox="0 0 6 9"><path d="M5 .7 1.300 4.500 5 8.300" fill="none" stroke="#222" stroke-width="1.600"/></svg>
        <svg width="6" height="9" viewBox="0 0 6 9"><path d="M1 .7 4.700 4.500 1 8.300" fill="none" stroke="#222" stroke-width="1.600"/></svg>
        <svg width="3" height="11" viewBox="0 0 3 11"><path d="M0 0h3v2.600H0ZM0 4.200h3v2.600H0ZM0 8.400h3V11H0Z" fill="#222"/></svg>
        <svg width="8" height="8" viewBox="0 0 8 8"><path d="M.6.6l6.800 6.800M7.400.6.6 7.400" stroke="#222" stroke-width="1.500"/></svg>
      </div>
    </div>
    <svg class="vscroll" viewBox="1906 197 14 789"><path d="M1909.500 205.500 1912.500 202.500 1915.500 205.500M1909.500 976.500 1912.500 979.500 1915.500 976.500" fill="none" stroke="#555" stroke-width="1.300"/><path d="M1906 333.500h8M1906 409.500h8M1906 494.500h8M1906 572.500h8M1906 655.500h8M1906 734.500h8" stroke="#2292f0"/><rect x="1915" y="643" width="8" height="27" rx="2" fill="#808080"/></svg>
    <div class="hscroll"><svg width="5" height="8" viewBox="0 0 5 8"><path d="M4 1 1 4l3 3" fill="none" stroke="#555" stroke-width="1.400"/></svg><b></b><svg width="5" height="8" viewBox="0 0 5 8"><path d="M1 1l3 3-3 3" fill="none" stroke="#555" stroke-width="1.400"/></svg></div>
    <footer class="status">
      <div class="st-left">
        <svg class="grip"><use href="#grip"/></svg>
        <svg class="ic" viewBox="0 0 24 24"><svg x="0" y="0" width="16" height="16" color="#999"><use href="#gear"/></svg><svg x="9" y="9" width="15" height="15" color="#ffa726"><use href="#gear"/></svg></svg>
        <span>Options...</span>
        <svg class="chev"><use href="#chev"/></svg>
        <i class="sep"></i>
        <svg width="16" height="16" viewBox="0 0 16 16"><path d="M2.500 13V3.500H12" fill="none" stroke="#777" stroke-width="1.300"/><path d="M10.500 1l4 2.500-4 2.500ZM0 12l2.500 4L5 12Z" fill="#666"/><path d="M14.500 6v8.500H5" fill="none" stroke="#777" stroke-dasharray="1 1.500"/></svg>
        <div class="two">W: 2383.94pt<br>H: 1683.78pt</div>
        <i class="sep"></i>
        <svg width="16" height="16" viewBox="0 0 16 16"><path d="M6.500 0v13M0 6.500h13" stroke="#777" stroke-width="1.300"/><path d="M7 7l8 5-4 .5L9 16Z" fill="#666"/></svg>
        <div class="two">X :<br>Y :</div>
      </div>
      <div class="st-mid">
        <svg class="grip"><use href="#grip"/></svg>
        <svg class="ic nav" viewBox="0 0 24 24"><circle cx="12" cy="12" r="10.500"/><path d="M8.500 7v10M17 7l-5 5 5 5"/></svg>
        <svg class="ic nav" viewBox="0 0 24 24"><circle cx="12" cy="12" r="10.500"/><path d="M14 7l-5 5 5 5"/></svg>
        <div class="pageno"><span>1</span><s>/</s><sup>1</sup></div>
        <svg class="ic nav" viewBox="0 0 24 24"><circle cx="12" cy="12" r="10.500"/><path d="M10 7l5 5-5 5"/></svg>
        <svg class="ic nav" viewBox="0 0 24 24"><circle cx="12" cy="12" r="10.500"/><path d="M15.500 7v10M7 7l5 5-5 5"/></svg>
        <i class="sep"></i>
        <svg class="ic"><use href="#i-back"/></svg>
        <svg class="ic"><use href="#i-fwd"/></svg>
      </div>
      <div class="st-right">
        <svg class="grip"><use href="#grip"/></svg>
        <svg width="17" height="21"><use href="#page"/></svg>
        <div class="seg"><svg width="18" height="24" viewBox="0 0 18 24"><path d="M1.500 0V10.500h15V0" fill="#fff" stroke="#888"/><path d="M1.500 24V14.500H11l5.500 7V24" fill="#fff" stroke="#888"/><path d="M10.500 14.500 16.500 23 11 20Z" fill="#666"/></svg></div>
        <svg width="25" height="16" viewBox="0 0 25 16"><path d="M.6.6h6l4 4v10.800H.6ZM13.600.6h6l4 4v10.800h-10Z" fill="#f8f8f8" stroke="#bbb"/><path d="M6.500.5l4 5-4-1ZM19.500.5l4 5-4-1Z" fill="#999"/></svg>
        <svg width="25" height="22" viewBox="0 0 25 22"><path d="M1 0v9.500h10V0M14 0v9.500h10V0M1 22v-9.500h6l4 4.500v5M14 22v-9.500h6l4 4.500v5" fill="#f8f8f8" stroke="#bbb"/><path d="M6.500 12.500l4 6-4-2ZM19.500 12.500l4 6-4-2Z" fill="#999"/></svg>
        <svg class="grip"><use href="#grip"/></svg>
        <div class="combo">1000%<svg class="chev"><use href="#chev"/></svg></div>
        <i class="sep"></i>
        <svg class="ic"><use href="#i-minus"/></svg>
        <svg width="100" height="20" viewBox="0 0 100 20"><path d="M0 10h71" stroke="#999" stroke-width="2.500"/><path d="M71 10h29" stroke="#c4c4c4" stroke-width="2.500"/><path d="M49.500 4v3M49.500 13v3" stroke="#888"/><circle cx="71.500" cy="10" r="9" fill="#fff" stroke="#808080" stroke-width="1.200"/><circle cx="71.500" cy="10" r="3.600" fill="#8a8a8a"/></svg>
        <svg class="ic"><use href="#i-plus"/></svg>
        <svg class="grip"><use href="#grip"/></svg>
        <svg width="22" height="22" viewBox="0 0 22 22"><rect width="22" height="22" rx="3.500" fill="#b30b00"/><path d="M4.500 16.500Q3.500 14 8.500 13q6-1.500 9 .5 0 2-3-.2Q11 9.500 10.500 7q0-3.500 1-2 .5 3.500-3 8.500-2.500 3.500-4 3Z" fill="none" stroke="#fff" stroke-width="1.200"/></svg>
        <svg class="chev"><use href="#chev"/></svg>
        <svg class="ddown" width="8" height="8" viewBox="0 0 8 8"><path d="M1 .5l3 3 3-3M.5 7h7" fill="none" stroke="#333" stroke-width="1.200"/></svg>
      </div>
    </footer>
  </div>
</main>
</body>
</html>
```

FILE: styles.css
```css
* { box-sizing: border-box; }
body {
  margin: 0; width: 1920px; height: 1032px; overflow: hidden;
  display: flex; flex-direction: column;
  font: 12px/13px "Open Sans", "Noto Sans", sans-serif; letter-spacing: -0.32px;
  color: #111; background: #f3f3f3; white-space: nowrap;
}
svg { display: block; flex: none; overflow: visible; }
.defs { position: absolute; width: 0; height: 0; }
.ic { width: 24px; height: 24px; }
.chev { width: 8px; height: 6px; color: #333; }
.chev.dim { color: #999; }
.corner { width: 3px; height: 3px; }
.sep { width: 1px; height: 100%; background: #b5b5b5; }

/* title bar and tab strip */
.titlebar {
  height: 60px; background: #d6d6d6; border-bottom: 1px solid #a8a8a8;
  display: grid; grid-template: 30px 29px / 758px 74px 727px 361px;
}
.qat {
  display: grid; align-items: center; justify-items: center; height: 29px;
  grid-template-columns: 28px 4px 28px 13px 26px 30px 26px 14px 27px 12px 3px 28px 12px 28px 12px 3px 28px 28px;
}
.context {
  grid-column: 2; grid-row: 1 / 3; margin-top: 1px; background: #d3cdae;
  border: 1px solid #cfba5f; border-top: 2px solid #c9a516; border-bottom: 0;
  display: grid; grid-template-rows: 27px 28px; align-items: center; text-align: center;
}
.caption { display: flex; align-items: center; justify-content: center; height: 30px; padding: 0 3px 1px 0; }
.wintools {
  display: grid; align-items: center; justify-items: center; height: 29px;
  grid-template-columns: 152px 5px 27px 13px 2px 27px 3px 44px 45px 43px;
}
.quick {
  width: 152px; height: 23px; border: 1px solid #b0b0b0; border-radius: 2px; background: #fff;
  display: flex; align-items: center; gap: 5px; padding-left: 2px; color: #8c8c8c;
}
.tabs {
  grid-row: 2; grid-column: 1; display: grid; height: 30px;
  grid-template-columns: 55px 54px 43px 72px 56px 46px 65px 60px 47px 55px 83px 77px 43px;
}
.tabs a { display: flex; align-items: center; justify-content: center; padding-bottom: 2px; }
.tabs .file { background: #b04a4a; color: #fff; height: 29px; border-radius: 2px 2px 0 0; padding-bottom: 1px; }
.tabs .home {
  margin-left: 3px; background: #f5f5f5; border: 1px solid #bbb; border-bottom: 0;
  border-radius: 3px 3px 0 0; color: #0f3a66; position: relative;
}
.tabs .home::after { content: ""; position: absolute; left: 6px; right: 6px; bottom: 2px; height: 2px; background: #7d9fb8; }
.finders { grid-row: 2; grid-column: 4; display: flex; padding-left: 195px; align-items: center; }
.fbtn { display: flex; align-items: center; gap: 3px; width: 66px; height: 28px; padding-left: 1px; }
.fbtn.on { width: 64px; background: #e5cf9c; border: 1px solid #c2b28a; }
.fbtn:nth-child(2) { margin-left: 1px; width: 72px; }
.finders .up { margin: -4px 0 0 16px; }

/* ribbon */
.ribbon { height: 103px; background: #f3f3f3; border-bottom: 1px solid #4d4d4d; display: flex; }
.group { border-right: 1px solid #c6c6c6; padding-top: 2px; }
.items { display: flex; height: 84px; }
.gname { height: 15px; line-height: 16px; text-align: center; color: #808080; }
.group .sep { height: 84px; background: #c6c6c6; }
.big { display: flex; flex-direction: column; align-items: center; padding-top: 3px; height: 84px; }
.big > svg { width: 48px; height: 48px; }
.big > span { margin-top: 4px; text-align: center; }
.big span .chev { display: inline-block; vertical-align: 0; margin: 0 auto; }
.big.on { background: #e5cf9c; border: 1px solid #c6b995; padding-top: 2px; }
.list { display: grid; grid-template-rows: repeat(3, 28px); margin-top: -1px; }
.list > div { display: flex; align-items: center; gap: 3px; }
.list .ic { margin-top: 2px; }
.list .chev { margin-left: 3px; }
.list .corner { align-self: flex-end; margin: 0 0 5px -1px; }
.tools { width: 268px; }
.tools .items { padding-left: 1px; }
.tools .big { width: 52px; }
.tools .big:nth-child(3) { width: 64px; }
.tools .list { padding-left: 1px; }
.view { width: 177px; }
.rows { display: grid; grid-template-rows: repeat(3, 28px); }
.rows > div { display: grid; align-items: center; justify-items: center; }
.rows .sep { height: 28px; }
.r1 { grid-template-columns: 31px 113px 29px; }
.r2 { grid-template-columns: 31px 26px 30px 26px 4px 26px 32px; }
.r3 { grid-template-columns: 32px 27px 27px 27px 29px 3px 28px; }
.combo {
  width: 113px; height: 23px; border: 1px solid #b4b4b4; border-radius: 2px; background: #fff;
  display: flex; align-items: center; justify-content: space-between; padding: 0 4px 1px 3px;
}
.objects { width: 217px; }
.objects .big { width: 54px; }
.objects .big:nth-child(4) { width: 52px; }
.comment { width: 269px; }
.comment .items { padding-left: 4px; }
.comment .list { width: 111px; }
.comment .list + .list { width: 97px; }
.comment .big { width: 54px; }
.comment .big > * { margin-left: -2px; }
.links { width: 209px; }
.links .big { width: 55px; }
.links .list { letter-spacing: -0.18px; }
.links .list > div { gap: 4px; }
.protect { width: 66px; }
.protect .big { width: 65px; padding-left: 1px; }
.protect .big > span { letter-spacing: -0.4px; }

/* document tabs */
.doctabs {
  height: 34px; display: flex; border-bottom: 2px solid #fafafa;
  background: repeating-linear-gradient(45deg, rgba(255,255,255,.05) 0 1px, transparent 1px 3px), linear-gradient(#7b7b7b, #8b8b8b);
}
.doctab {
  width: 208px; background: #fcfcfc; border-radius: 0 3px 0 0; padding: 5px 6px 0 5px;
  display: flex; justify-content: space-between; letter-spacing: -0.42px;
}
.doctab span { width: 197px; height: 26px; line-height: 21px; border-bottom: 2px solid #a0a0a0; }
.doctab svg { margin: 0 0 0 -7px; }
.newtab, .closeall { display: grid; place-items: center; background: #cbcbcb; border-radius: 2px; }
.newtab { width: 27px; height: 27px; margin: 3px 0 0 2px; }
.closeall { width: 30px; height: 29px; margin: 1px 1px 0 auto; }

/* work area */
.work { flex: 1; display: flex; min-height: 0; }
.side { width: 31px; display: flex; flex-direction: column; align-items: center; gap: 4px; padding-right: 2px; border-bottom: 1px solid #d0d0d0; }
.sidehead { width: 31px; height: 11px; margin-right: -2px; background: #e6e6e6; display: flex; justify-content: flex-end; align-items: center; padding-right: 1px; }
.sidegrip { width: 25px; height: 9px; margin: -2px 0 -1px 2px; background: radial-gradient(circle, #aaa 0.6px, transparent 0.9px) 0 0 / 2.5px 2.5px; }
.hsep { width: 28px; height: 1px; background: #c4c4c4; margin: 0 0 -1px; }
.docarea { flex: 1; display: grid; grid-template: 789px 15px 31px / 1875px 14px; }
.viewport { position: relative; overflow: hidden; background: #fff; border: solid #777; border-width: 0 1px 1px 1px; }
.drawing { overflow: hidden; }
.viewport::after { content: ""; position: absolute; inset: 0; box-shadow: inset 0 2px 2px -1px #777, inset 1px 0 1px #aaa, inset -1px 0 1px #bbb, inset 0 -1px 1px #aaa; pointer-events: none; }
.cad { font-family: "Liberation Sans", Arial, sans-serif; font-size: 128px; letter-spacing: 0; font-kerning: none; stroke: #000; stroke-width: 0.5px; }
.cad .one { font-family: "Open Sans", sans-serif; font-size: 123.3px; stroke-width: 1.5px; }
.findbar {
  position: absolute; z-index: 2; left: 1562px; top: 2px; width: 309px; height: 32px;
  background: #f5f5f5; border-radius: 3px; box-shadow: 0 1px 5px rgba(0,0,0,.55);
  display: grid; align-items: center; justify-items: center; padding-left: 2px; color: #333;
  grid-template-columns: 23px 192px 21px 22px 22px 22px;
}
.findbox { width: 192px; height: 24px; border: 1px solid #b4b4b4; border-radius: 2px; background: #fff; display: flex; align-items: center; padding: 0 4px 1px 3px; }
.findbox em { margin-left: auto; margin-right: 3px; font-style: normal; color: #777; }
.findbox .chev { margin-left: 8px; }
.vscroll { width: 14px; height: 789px; background: #f0f0f0; overflow: hidden; }
.hscroll { grid-column: 1; background: #f0f0f0; display: flex; align-items: center; padding: 0 6px 0 5px; }
.hscroll b { width: 108px; height: 5px; border-radius: 3px; background: #808080; margin: 0 auto 0 662px; }
.status { grid-column: 1 / 3; display: grid; grid-template-columns: 799px 642px 448px; height: 31px; }
.status > div { display: grid; align-items: center; justify-items: center; height: 31px; }
.st-left { justify-content: start; grid-template-columns: 12px 27px 57px 10px 5px 19px 70px 3px 19px 20px; }
.st-left span, .st-left .two { justify-self: start; }
.st-left .two:last-child { padding-left: 2px; }
.st-left span { padding-left: 2px; }
.st-mid { justify-content: start; grid-template-columns: 11px 28px 28px 98px 28px 28px 3px 28px 28px; }
.st-right { grid-template-columns: 11px 28px 28px 28px 28px 15px 81px 5px 26px 106px 26px 17px 22px 18px 7px; justify-content: start; }
.grip { width: 10px; height: 27px; }
.nav { fill: none; stroke: #90caf9; stroke-width: 2.2; }
.nav circle { fill: #f8f8f8; stroke: #bdbdbd; stroke-width: 1.2; }
.pageno { width: 95px; height: 23px; background: #fafafa; border: 1px solid #bcbcbc; border-radius: 2px; display: flex; justify-content: flex-end; align-items: center; padding-right: 3px; color: #666; }
.pageno s { text-decoration: none; font-size: 18px; }
.pageno sup { font-size: 11px; margin-top: -5px; line-height: 11px; vertical-align: baseline; }
.seg { width: 28px; height: 28px; background: #e5cf9c; border: 1px solid #c2b28a; display: grid; place-items: center; }
.seg svg { height: 22px; }
.st-right .combo { width: 82px; }
.ddown { align-self: start; margin-top: 2px; }
```
